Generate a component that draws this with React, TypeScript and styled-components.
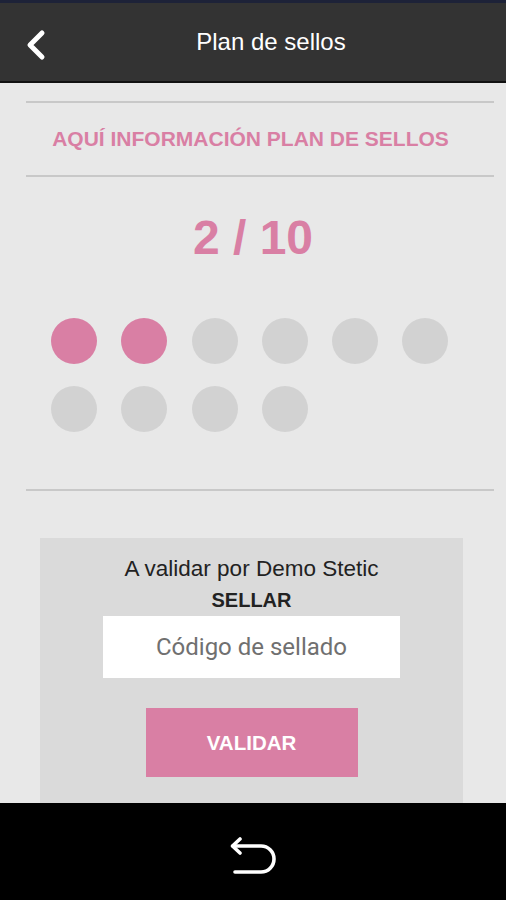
import React from 'react';
import styled, { createGlobalStyle } from 'styled-components';

const GlobalStyle = createGlobalStyle`
  html, body {
    margin: 0;
    padding: 0;
    background: #000;
  }
  * {
    box-sizing: border-box;
  }
`;

const PINK = '#d97fa4';

const Screen = styled.div`
  width: 506px;
  height: 900px;
  display: flex;
  flex-direction: column;
  overflow: hidden;
  font-family: 'Liberation Sans', Arial, sans-serif;
  background: #e8e8e8;
`;

const StatusStrip = styled.div`
  height: 3px;
  flex-shrink: 0;
  background: #1d2238;
`;

const Header = styled.header`
  height: 80px;
  flex-shrink: 0;
  background: #333333;
  border-bottom: 2px solid #111;
  display: flex;
  align-items: center;
  justify-content: center;
  position: relative;
`;

const BackButton = styled.button`
  position: absolute;
  left: 22px;
  top: 25px;
  width: 32px;
  height: 34px;
  background: none;
  border: 0;
  padding: 0;
  display: flex;
  align-items: center;
  justify-content: center;
`;

const Title = styled.h1`
  margin: 0;
  font-size: 24px;
  font-weight: 400;
  color: #fff;
  padding-left: 36px;
`;

const Content = styled.main`
  flex: 1;
  overflow: hidden;
  padding-top: 18px;
  display: flex;
  flex-direction: column;
  & > * {
    flex-shrink: 0;
  }
`;

const Rule = styled.hr<{ $top?: number }>`
  margin: ${(p) => p.$top ?? 0}px 12px 0 26px;
  border: 0;
  height: 2px;
  background: #c8c8c8;
`;

const InfoTitle = styled.h2`
  margin: 0;
  padding-right: 5px;
  height: 72px;
  display: flex;
  align-items: center;
  justify-content: center;
  font-size: 21px;
  font-weight: 700;
  color: ${PINK};
`;

const Counter = styled.div`
  text-align: center;
  margin-top: 36px;
  font-size: 48px;
  line-height: 50px;
  font-weight: 700;
  color: ${PINK};
`;

const StampGrid = styled.div`
  margin-top: 55px;
  margin-left: 51px;
  display: grid;
  grid-template-columns: repeat(6, 46px);
  column-gap: 24.3px;
  row-gap: 22px;
`;

const Stamp = styled.div<{ $filled: boolean }>`
  width: 46px;
  height: 46px;
  border-radius: 50%;
  background: ${(p) => (p.$filled ? PINK : '#d2d2d2')};
`;

const Card = styled.section`
  margin: 47px 0 0 40px;
  width: 423px;
  background: #dadada;
  display: flex;
  flex-direction: column;
  align-items: center;
  padding: 15px 0 40px;
`;

const CardText = styled.p<{ $bold?: boolean }>`
  margin: 0;
  font-size: ${(p) => (p.$bold ? 20 : 22.5)}px;
  line-height: ${(p) => (p.$bold ? 30 : 32)}px;
  color: #222;
  font-weight: ${(p) => (p.$bold ? 700 : 400)};
`;

const CodeInput = styled.input`
  margin-top: 1px;
  width: 297px;
  height: 62px;
  border: 0;
  outline: none;
  background: #fff;
  text-align: center;
  font-family: Roboto, 'Noto Sans', sans-serif;
  font-size: 24px;
  color: #333;
  &::placeholder {
    color: #707070;
  }
`;

const ValidateButton = styled.button`
  margin-top: 30px;
  width: 212px;
  height: 69px;
  border: 0;
  background: ${PINK};
  color: #fff;
  font-family: 'Liberation Sans', Arial, sans-serif;
  font-size: 20.5px;
  font-weight: 700;
`;

const NavBar = styled.nav`
  height: 97px;
  flex-shrink: 0;
  padding-top: 14px;
  background: #000;
  display: flex;
  align-items: center;
  justify-content: center;
`;

const ChevronLeft = () => (
  <svg width="32" height="34" viewBox="0 0 32 34">
    <path
      d="M20 5 L8 17 L20 29"
      fill="none"
      stroke="#fff"
      strokeWidth="5"
      strokeLinecap="round"
      strokeLinejoin="round"
    />
  </svg>
);

const SystemBack = () => (
  <svg width="52" height="44" viewBox="0 0 52 44">
    <path
      d="M6 9 H34 A13 13 0 0 1 34 35 H8"
      fill="none"
      stroke="#fff"
      strokeWidth="3.6"
      strokeLinecap="round"
    />
    <path
      d="M13 2 L5.5 9 L13 16"
      fill="none"
      stroke="#fff"
      strokeWidth="3.6"
      strokeLinecap="round"
      strokeLinejoin="round"
    />
  </svg>
);

const TOTAL = 10;
const DONE = 2;

export default function App() {
  return (
    <>
      <GlobalStyle />
      <Screen>
        <StatusStrip />
        <Header>
          <BackButton aria-label="Volver">
            <ChevronLeft />
          </BackButton>
          <Title>Plan de sellos</Title>
        </Header>
        <Content>
          <Rule />
          <InfoTitle>AQUÍ INFORMACIÓN PLAN DE SELLOS</InfoTitle>
          <Rule />
          <Counter>
            {DONE} / {TOTAL}
          </Counter>
          <StampGrid>
            {Array.from({ length: TOTAL }, (_, i) => (
              <Stamp key={i} $filled={i < DONE} />
            ))}
          </StampGrid>
          <Rule $top={57} />
          <Card>
            <CardText>A validar por Demo Stetic</CardText>
            <CardText $bold>SELLAR</CardText>
            <CodeInput placeholder="Código de sellado" />
            <ValidateButton>VALIDAR</ValidateButton>
          </Card>
        </Content>
        <NavBar>
          <SystemBack />
        </NavBar>
      </Screen>
    </>
  );
}
